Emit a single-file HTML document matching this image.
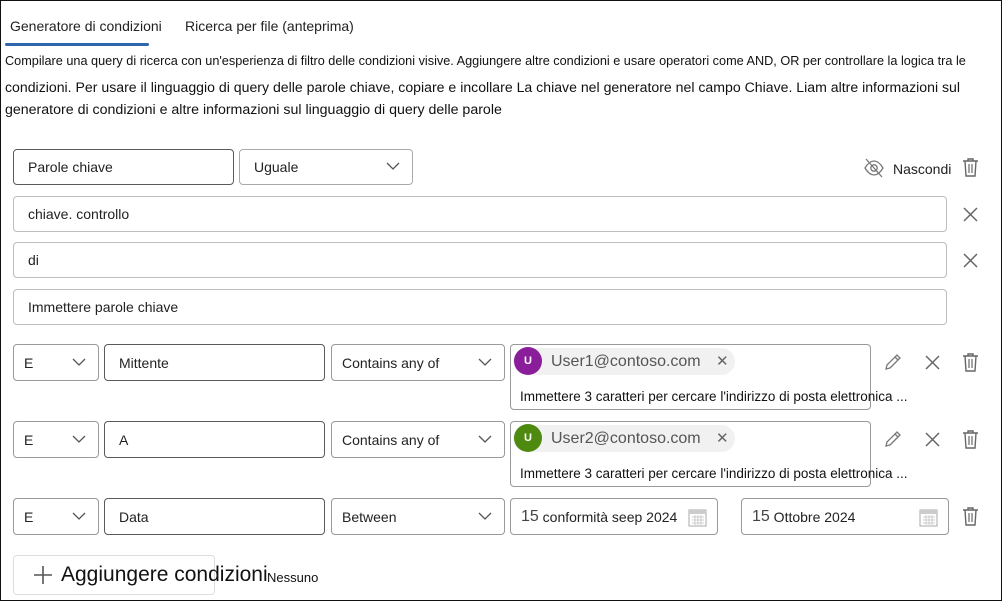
<!DOCTYPE html>
<html><head><meta charset="utf-8"><style>
*{box-sizing:border-box;margin:0;padding:0}
body{width:1002px;height:601px;overflow:hidden;background:#fff;font-family:"Liberation Sans",Arial,sans-serif;color:#222;position:relative}
.frame{position:absolute;left:0;top:0;width:1002px;height:601px;border:1px solid #111}
.a{position:absolute;white-space:nowrap}
.box{position:absolute;border:1px solid #bdbdbd;border-radius:4px;background:#fff;font-size:14px;display:flex;align-items:center;padding-left:14px;white-space:nowrap}
.dark{border:1.5px solid #5a5a5a}
.chev{position:absolute;right:12px;top:50%;margin-top:-5px}
.ic{position:absolute}
</style></head><body>
<div class="frame"></div>
<div class="a" style="left:10px;top:18px;font-size:14px;color:#222">Generatore di condizioni</div>
<div class="a" style="left:185px;top:18px;font-size:14px;color:#222">Ricerca per file (anteprima)</div>
<div class="a" style="left:5px;top:43px;width:144px;height:3px;background:#2d66ad;border-radius:2px"></div>
<div class="a" style="left:5px;top:54px;font-size:12.7px;color:#111">Compilare una query di ricerca con un'esperienza di filtro delle condizioni visive. Aggiungere altre condizioni e usare operatori come AND, OR per controllare la logica tra le</div>
<div class="a" style="left:5px;top:79px;font-size:14.1px;color:#111">condizioni. Per usare il linguaggio di query delle parole chiave, copiare e incollare La chiave nel generatore nel campo Chiave. Liam altre informazioni sul</div>
<div class="a" style="left:5px;top:102px;font-size:14.2px;color:#111">generatore di condizioni e altre informazioni sul linguaggio di query delle parole</div>

<div class="box dark" style="left:13px;top:149px;width:221px;height:36px">Parole chiave</div>
<div class="box" style="left:239px;top:149px;width:174px;height:36px;border-color:#aaa">Uguale<svg class="chev" width="14" height="9"><path d="M1 1l6 6 6-6" fill="none" stroke="#555" stroke-width="1.3"/></svg></div>
<svg class="ic" style="left:863px;top:158px" width="22" height="20" viewBox="0 0 22 20"><path d="M2 10c3-5 6-7 9-7s6 2 9 7c-3 5-6 7-9 7s-6-2-9-7z" fill="none" stroke="#777" stroke-width="1.3"/><circle cx="11" cy="10" r="3.2" fill="none" stroke="#777" stroke-width="1.3"/><path d="M3 1l16 18" stroke="#777" stroke-width="1.3"/></svg>
<div class="a" style="left:893px;top:161px;font-size:14px">Nascondi</div>
<svg class="ic" style="left:962px;top:158px" width="17" height="19" viewBox="0 0 17 19"><path d="M1 3h15M6 3V1h5v2M3 3l1 15h9l1-15" fill="none" stroke="#666" stroke-width="1.4"/><path d="M7 6v9M10 6v9" stroke="#666" stroke-width="1.2"/></svg>

<div class="box" style="left:13px;top:196px;width:934px;height:36px">chiave. controllo</div>
<div class="box" style="left:13px;top:242px;width:934px;height:36px">di</div>
<div class="box" style="left:13px;top:289px;width:934px;height:36px">Immettere parole chiave</div>
<svg class="ic" style="left:963px;top:207px" width="15" height="15"><path d="M1 1l13 13M14 1L1 14" stroke="#666" stroke-width="1.5"/></svg>
<svg class="ic" style="left:963px;top:253px" width="15" height="15"><path d="M1 1l13 13M14 1L1 14" stroke="#666" stroke-width="1.5"/></svg>

<!-- row Mittente -->
<div class="box" style="left:13px;top:344px;width:86px;height:37px;padding-left:10px;border-color:#999">E<svg class="chev" width="14" height="9"><path d="M1 1l6 6 6-6" fill="none" stroke="#555" stroke-width="1.3"/></svg></div>
<div class="box dark" style="left:104px;top:344px;width:221px;height:37px">Mittente</div>
<div class="box" style="left:331px;top:344px;width:174px;height:37px;padding-left:10px;border-color:#999">Contains any of<svg class="chev" width="14" height="9"><path d="M1 1l6 6 6-6" fill="none" stroke="#555" stroke-width="1.3"/></svg></div>
<div class="box" style="left:510px;top:344px;width:361px;height:66px;border-color:#999;display:block;padding:0">
 <div class="a" style="left:2px;top:3px;width:222px;height:27px;background:#f1f1f1;border-radius:14px"></div>
 <div class="a" style="left:3px;top:2px;width:28px;height:28px;border-radius:50%;background:#8a1e9a;color:#fff;font-size:11px;font-weight:bold;text-align:center;line-height:28px">U</div>
 <div class="a" style="left:40px;top:8px;font-size:16px;color:#555">User1@contoso.com</div>
 <div class="a" style="left:205px;top:7px;font-size:15px;color:#666">✕</div>
 <div class="a" style="left:9px;top:44px;font-size:13.5px;color:#111">Immettere 3 caratteri per cercare l'indirizzo di posta elettronica ...</div>
</div>
<svg class="ic" style="left:883px;top:352px" width="20" height="20"><path d="M3 17l1-4L14 3l3 3L7 16z M12 5l3 3" fill="none" stroke="#777" stroke-width="1.3"/></svg>
<svg class="ic" style="left:925px;top:355px" width="15" height="15"><path d="M1 1l13 13M14 1L1 14" stroke="#666" stroke-width="1.5"/></svg>
<svg class="ic" style="left:962px;top:353px" width="17" height="19" viewBox="0 0 17 19"><path d="M1 3h15M6 3V1h5v2M3 3l1 15h9l1-15" fill="none" stroke="#666" stroke-width="1.4"/><path d="M7 6v9M10 6v9" stroke="#666" stroke-width="1.2"/></svg>

<!-- row A -->
<div class="box" style="left:13px;top:421px;width:86px;height:37px;padding-left:10px;border-color:#999">E<svg class="chev" width="14" height="9"><path d="M1 1l6 6 6-6" fill="none" stroke="#555" stroke-width="1.3"/></svg></div>
<div class="box dark" style="left:104px;top:421px;width:221px;height:37px">A</div>
<div class="box" style="left:331px;top:421px;width:174px;height:37px;padding-left:10px;border-color:#999">Contains any of<svg class="chev" width="14" height="9"><path d="M1 1l6 6 6-6" fill="none" stroke="#555" stroke-width="1.3"/></svg></div>
<div class="box" style="left:510px;top:421px;width:361px;height:66px;border-color:#999;display:block;padding:0">
 <div class="a" style="left:2px;top:3px;width:222px;height:27px;background:#f1f1f1;border-radius:14px"></div>
 <div class="a" style="left:3px;top:2px;width:28px;height:28px;border-radius:50%;background:#4e8a10;color:#fff;font-size:11px;font-weight:bold;text-align:center;line-height:28px">U</div>
 <div class="a" style="left:40px;top:8px;font-size:16px;color:#555">User2@contoso.com</div>
 <div class="a" style="left:205px;top:7px;font-size:15px;color:#666">✕</div>
 <div class="a" style="left:9px;top:44px;font-size:13.5px;color:#111">Immettere 3 caratteri per cercare l'indirizzo di posta elettronica ...</div>
</div>
<svg class="ic" style="left:883px;top:429px" width="20" height="20"><path d="M3 17l1-4L14 3l3 3L7 16z M12 5l3 3" fill="none" stroke="#777" stroke-width="1.3"/></svg>
<svg class="ic" style="left:925px;top:432px" width="15" height="15"><path d="M1 1l13 13M14 1L1 14" stroke="#666" stroke-width="1.5"/></svg>
<svg class="ic" style="left:962px;top:430px" width="17" height="19" viewBox="0 0 17 19"><path d="M1 3h15M6 3V1h5v2M3 3l1 15h9l1-15" fill="none" stroke="#666" stroke-width="1.4"/><path d="M7 6v9M10 6v9" stroke="#666" stroke-width="1.2"/></svg>

<!-- row Data -->
<div class="box" style="left:13px;top:498px;width:86px;height:37px;padding-left:10px;border-color:#999">E<svg class="chev" width="14" height="9"><path d="M1 1l6 6 6-6" fill="none" stroke="#555" stroke-width="1.3"/></svg></div>
<div class="box dark" style="left:104px;top:498px;width:221px;height:37px">Data</div>
<div class="box" style="left:331px;top:498px;width:174px;height:37px;padding-left:10px;border-color:#999">Between<svg class="chev" width="14" height="9"><path d="M1 1l6 6 6-6" fill="none" stroke="#555" stroke-width="1.3"/></svg></div>
<div class="box" style="left:510px;top:498px;width:208px;height:37px;padding-left:10px;border-color:#999"><span style="font-size:16px;color:#444">15</span>&nbsp;conformità seep 2024
<svg class="ic" style="right:10px;top:9px" width="19" height="19"><rect x="1" y="2" width="17" height="16" fill="none" stroke="#aaa"/><rect x="1" y="2" width="17" height="4" fill="#ccc"/><path d="M4 9h12M4 12h12M4 15h12M7 7v10M10 7v10M13 7v10" stroke="#ccc"/></svg></div>
<div class="box" style="left:741px;top:498px;width:208px;height:37px;padding-left:10px;border-color:#999"><span style="font-size:16px;color:#444">15</span>&nbsp;Ottobre 2024
<svg class="ic" style="right:10px;top:9px" width="19" height="19"><rect x="1" y="2" width="17" height="16" fill="none" stroke="#aaa"/><rect x="1" y="2" width="17" height="4" fill="#ccc"/><path d="M4 9h12M4 12h12M4 15h12M7 7v10M10 7v10M13 7v10" stroke="#ccc"/></svg></div>
<svg class="ic" style="left:962px;top:507px" width="17" height="19" viewBox="0 0 17 19"><path d="M1 3h15M6 3V1h5v2M3 3l1 15h9l1-15" fill="none" stroke="#666" stroke-width="1.4"/><path d="M7 6v9M10 6v9" stroke="#666" stroke-width="1.2"/></svg>

<div class="box" style="left:13px;top:555px;width:202px;height:40px;border-color:#ddd;padding-left:20px;font-size:21px;color:#111;overflow:visible"><svg width="18" height="18" style="margin-right:9px;flex:none"><path d="M9 0v18M0 9h18" stroke="#555" stroke-width="1.6"/></svg>Aggiungere condizioni</div>
<div class="a" style="left:267px;top:570px;font-size:13px;color:#111">Nessuno</div>
</body></html>
